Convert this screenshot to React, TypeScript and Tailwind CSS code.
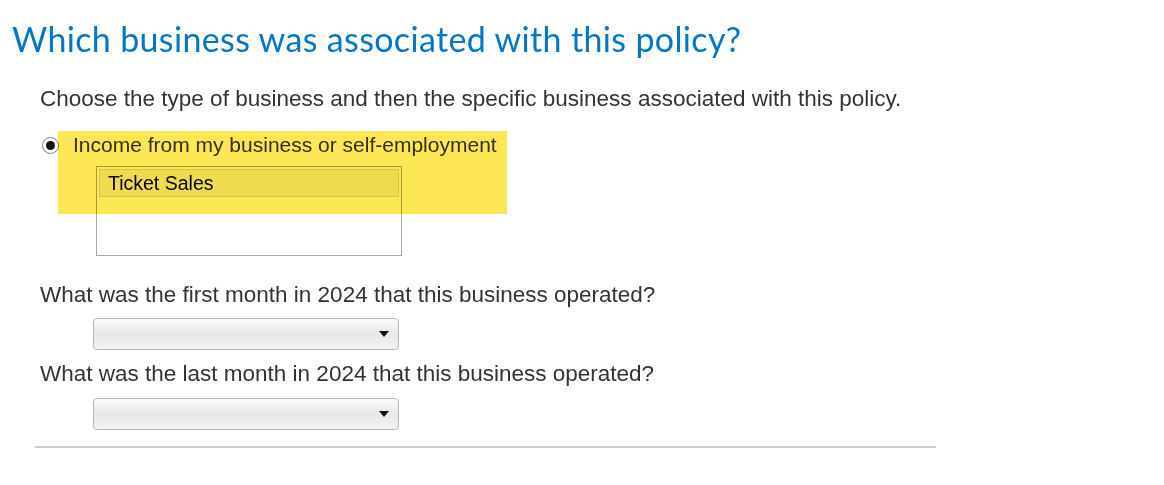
import { useState } from 'react'

const body = { fontFamily: '"Liberation Sans", Arial, sans-serif' }

function MonthSelect() {
  return (
    <div className="ml-[53px] flex h-[32px] w-[306px] items-center justify-end rounded-[4px] border border-[#b8b8b8] bg-linear-to-b from-[#fbfbfb] via-[#e7e7e7] to-[#f4f4f4] pr-[9px]">
      <svg width="10" height="6" viewBox="0 0 10 6">
        <path d="M0 0h10L5 6z" fill="#111" />
      </svg>
    </div>
  )
}

export default function App() {
  const [picked] = useState('business')

  return (
    <div className="min-h-[485px] bg-white pl-[12px] pt-[19px]" style={body}>
      <h1
        className="text-[34px] leading-[40px] tracking-[0.35px] text-[#0077c5]"
        style={{ fontFamily: 'Lato, "Open Sans", sans-serif' }}
      >
        Which business was associated with this policy?
      </h1>

      <div className="pl-[28px] text-[22.5px] leading-[26px] text-[#333]">
        <p className="mt-[27px]">Choose the type of business and then the specific business associated with this policy.</p>

        <div className="relative mt-[20px]">
          <label className="flex items-center text-[21px]">
            <span className="ml-[2px] flex h-[17px] w-[17px] items-center justify-center rounded-full border border-[#808080] bg-white">
              {picked === 'business' && <span className="h-[9px] w-[9px] rounded-full bg-[#111]" />}
            </span>
            <span className="ml-[14px]">Income from my business or self-employment</span>
          </label>

          <div className="ml-[56px] mt-[8px] h-[90px] w-[306px] border border-[#a9a9a9] bg-white p-[2px]">
            <div className="h-[28px] border border-[#d9d9d9] bg-[#f2f2f2] pl-[8px] text-[19.5px] text-black">Ticket Sales</div>
          </div>

          <div className="pointer-events-none absolute left-[18px] top-[-1px] h-[83px] w-[449px] bg-[#fde754] mix-blend-multiply" />
        </div>

        <p className="mt-[26px]">What was the first month in 2024 that this business operated?</p>
        <div className="mt-[10px]">
          <MonthSelect />
        </div>

        <p className="mt-[11px]">What was the last month in 2024 that this business operated?</p>
        <div className="mt-[11px]">
          <MonthSelect />
        </div>
      </div>

      <hr className="ml-[23px] mt-[16px] w-[901px] border-0 border-t-2 border-[#cccccc]" />
    </div>
  )
}
